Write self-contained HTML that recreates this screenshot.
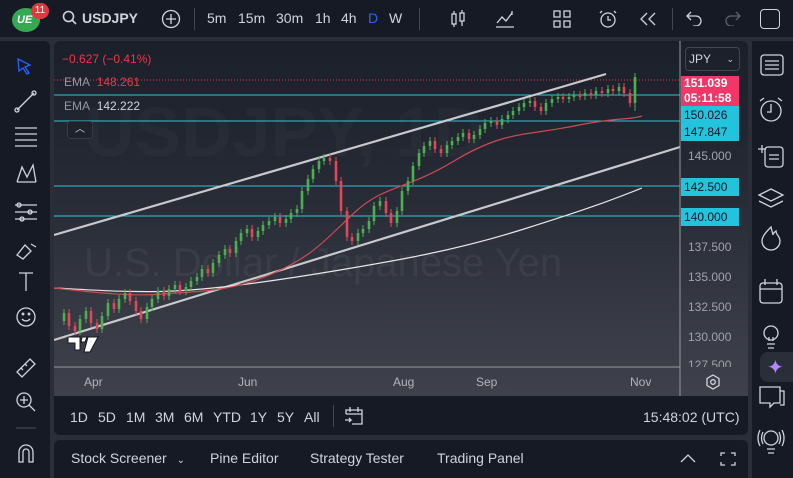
<!DOCTYPE html>
<html><head><meta charset="utf-8"><style>
*{margin:0;padding:0;box-sizing:border-box}
body{width:793px;height:478px;background:#2a2e39;font-family:"Liberation Sans",sans-serif;overflow:hidden;position:relative;color:#d1d4dc}
.abs{position:absolute}
.top{left:0;top:0;width:793px;height:37px;background:#161a25}
.tb{font-size:14px;color:#d1d4dc;top:10px}
.left{left:0;top:41px;width:50px;height:437px;background:#161a25;border-radius:0 6px 0 0}
.right{left:752px;top:41px;width:41px;height:437px;background:#161a25}
.chart{left:54px;top:41px;width:694px;height:355px;background:linear-gradient(#1b1f2a 0%,#262a35 40%,#3a3d47 85%,#3e414b 100%);border-radius:6px 6px 0 0;overflow:hidden}
.range{left:54px;top:396px;width:694px;height:39px;background:#161a25;border-radius:0 0 6px 6px}
.bot{left:54px;top:440px;width:694px;height:38px;background:#161a25;border-radius:6px 6px 0 0}
.lbl{position:absolute;left:681px;width:58px;height:18px;font-size:12px;line-height:18px;padding-left:3px;color:#131722}
.ax{position:absolute;left:688px;font-size:12px;color:#a0a3ab}
.rb{font-size:14px;color:#d1d4dc;top:409px}
</style></head><body>
<div class="abs top"></div>
<div class="abs" style="left:12px;top:8px;width:28px;height:24px;border-radius:50%;background:#35a854"></div>
<div class="abs" style="left:17px;top:14px;font-size:11px;font-weight:bold;color:#fff;font-style:italic">UE</div>
<div class="abs" style="left:31px;top:3px;width:18px;height:16px;border-radius:8px;background:#e0383e;color:#fff;font-size:10px;text-align:center;line-height:16px">11</div>
<svg class="abs" style="left:62px;top:10px" width="16" height="16"><circle cx="6.5" cy="6.5" r="5" fill="none" stroke="#d1d4dc" stroke-width="1.6"/><path d="M10 10l4 4" stroke="#d1d4dc" stroke-width="1.6"/></svg>
<div class="abs tb" style="left:82px;font-weight:bold">USDJPY</div>
<svg class="abs" style="left:161px;top:9px" width="20" height="20"><circle cx="10" cy="10" r="8.5" fill="none" stroke="#d1d4dc" stroke-width="1.3"/><path d="M10 5v10M5 10h10" stroke="#d1d4dc" stroke-width="1.3"/></svg>
<div class="abs" style="left:194px;top:8px;width:1px;height:22px;background:#434651"></div>
<div class="abs tb" style="left:207px">5m</div><div class="abs tb" style="left:238px">15m</div><div class="abs tb" style="left:276px">30m</div><div class="abs tb" style="left:315px">1h</div><div class="abs tb" style="left:341px">4h</div><div class="abs tb" style="left:368px;color:#2962ff">D</div><div class="abs tb" style="left:389px">W</div>
<div class="abs" style="left:419px;top:8px;width:1px;height:22px;background:#434651"></div>
<svg class="abs" style="left:448px;top:9px" width="20" height="20" stroke="#d1d4dc" fill="none" stroke-width="1.3"><rect x="4" y="5" width="4" height="10"/><path d="M6 2v3M6 15v3"/><rect x="12" y="4" width="4" height="8"/><path d="M14 1v3M14 12v5"/></svg>
<svg class="abs" style="left:494px;top:9px" width="22" height="20" stroke="#d1d4dc" fill="none" stroke-width="1.3"><path d="M2 18h18M3 14l5-6 4 4 6-8"/><path d="M18 2v4"/></svg>
<svg class="abs" style="left:552px;top:9px" width="20" height="20" stroke="#d1d4dc" fill="none" stroke-width="1.3"><rect x="2" y="2" width="6" height="6"/><rect x="12" y="2" width="6" height="6"/><rect x="2" y="12" width="6" height="6"/><rect x="12" y="12" width="6" height="6"/></svg>
<svg class="abs" style="left:598px;top:8px" width="22" height="22" stroke="#d1d4dc" fill="none" stroke-width="1.3"><circle cx="10" cy="12" r="7"/><path d="M10 8v4h3M4 3l-2 2M16 3l2 2"/></svg>
<svg class="abs" style="left:638px;top:10px" width="20" height="18" stroke="#d1d4dc" fill="none" stroke-width="1.3"><path d="M9 3l-6 6 6 6M17 3l-6 6 6 6"/></svg>
<div class="abs" style="left:672px;top:8px;width:1px;height:22px;background:#434651"></div>
<svg class="abs" style="left:685px;top:10px" width="18" height="16" stroke="#d1d4dc" fill="none" stroke-width="1.3"><path d="M6 2L2 6l4 4M2 6h9a5 5 0 010 10H8"/></svg>
<svg class="abs" style="left:724px;top:10px" width="18" height="16" stroke="#5d606b" fill="none" stroke-width="1.3"><path d="M12 2l4 4-4 4M16 6H7a5 5 0 000 10h3"/></svg>
<div class="abs" style="left:760px;top:9px;width:20px;height:20px;border:1.5px solid #d1d4dc;border-radius:4px"></div>

<div class="abs left"></div>
<svg class="abs" style="left:0;top:50px" width="50" height="428" stroke="#d1d4dc" fill="none" stroke-width="1.3">
<path d="M18 9l12 6-5 2 4 6-2 1-4-6-4 3z" stroke="#2962ff"/>
<path d="M17 60l17-17"/><circle cx="17" cy="60" r="2"/><circle cx="34" cy="43" r="2"/>
<path d="M15 78h22M15 84h22M15 90h22M15 96h22"/>
<path d="M17 132l5-15 5 10 6-12 3 17M17 132h19"/>
<path d="M15 155h22M15 162h22M15 169h22"/><circle cx="19" cy="155" r="2"/><circle cx="30" cy="162" r="2"/><circle cx="22" cy="169" r="2"/>
<path d="M17 205l8-10 6 6-8 8zM31 194l5 3"/>
<path d="M19 223h14M26 223v18"/>
<circle cx="26" cy="267" r="9"/><path d="M22 269q4 4 8 0"/><circle cx="23" cy="264" r=".8"/><circle cx="29" cy="264" r=".8"/>
<path d="M17 322l13-13 5 5-13 13zM21 318l2 2M25 314l2 2"/>
<circle cx="24" cy="350" r="7"/><path d="M29 355l6 6M24 346v8M20 350h8"/>
<path d="M16 378h20" stroke="#434651"/>
<path d="M19 412v-10a7 7 0 0114 0v10h-4v-10a3 3 0 00-6 0v10z"/>
</svg>

<div class="abs right"></div>
<svg class="abs" style="left:752px;top:41px" width="41" height="437" stroke="#d1d4dc" fill="none" stroke-width="1.3">
<rect x="9" y="14" width="22" height="20" rx="3"/><path d="M13 20h14M13 24h14M13 28h14"/>
<circle cx="19" cy="70" r="10"/><path d="M19 63v8h-4M8 60l4-3M30 60l-4-3"/>
<path d="M10 104v8M6 108h8"/><rect x="13" y="106" width="18" height="20" rx="3"/><path d="M17 114h10M17 118h10"/>
<path d="M19 148l12 6-12 6-12-6zM7 160l12 6 12-6"/>
<path d="M19 186c-6 6-9 10-9 14a9 9 0 0018 0c0-5-4-6-4-10-3 2-3 4-3 4s-1-4-2-8z"/>
<rect x="8" y="242" width="22" height="20" rx="3"/><path d="M8 248h22M13 238v6M25 238v6"/>
<circle cx="19" cy="292" r="7"/><path d="M15 303h8M16 307h6M17 296v4M21 296v4"/>
<path d="M8 346h20v16h-6l-4 4v-4h-10zM28 350h4v14h-4"/>
<circle cx="19" cy="397" r="7"/><path d="M15 408h8M16 412h6M11 391q-3 6 0 12M27 391q3 6 0 12M8 389q-4 8 0 16M30 389q4 8 0 16"/>
</svg>
<div class="abs" style="left:760px;top:352px;width:33px;height:30px;background:#2a2e39;border-radius:8px 0 0 8px"></div>
<div class="abs" style="left:767px;top:355px;font-size:20px;color:#b388ff">✦</div>

<div class="abs chart">
<svg width="694" height="355" style="position:absolute;left:0;top:0">
<text x="30" y="235" font-size="40" fill="#ffffff" fill-opacity="0.05" font-family="Liberation Sans">U.S. Dollar / Japanese Yen</text>
<text x="30" y="115" font-size="70" fill="#ffffff" fill-opacity="0.022" font-family="Liberation Sans" font-weight="bold">USDJPY, 1D</text>
<line x1="0" y1="54" x2="626" y2="54" stroke="#2fc4d6" stroke-width="1"/>
<line x1="0" y1="80" x2="626" y2="80" stroke="#2fc4d6" stroke-width="1"/>
<line x1="0" y1="145" x2="626" y2="145" stroke="#2fc4d6" stroke-width="1"/>
<line x1="0" y1="175" x2="626" y2="175" stroke="#2fc4d6" stroke-width="1"/>
<line x1="0" y1="39" x2="626" y2="39" stroke="#f23645" stroke-width="1" stroke-dasharray="1,2"/>
<line x1="0" y1="194" x2="552" y2="33" stroke="#c8c9cc" stroke-width="2.2"/>
<line x1="0" y1="299" x2="626" y2="106" stroke="#c8c9cc" stroke-width="2.2"/>
<path d="M0 247C40 249 80 252 120 250S220 240 280 230S400 210 470 188S560 158 588 147" stroke="#e8e8e8" stroke-width="1.2" fill="none"/>
<path d="M0 247C30 250 70 256 110 253S180 250 220 232S270 200 300 172S350 150 400 120S470 95 520 85S570 80 588 75" stroke="#d04a50" stroke-width="1.2" fill="none"/>
<path stroke="#4caf50" stroke-width="1" fill="none" d="M10 284V268M26 294V274M32 282V266M48 292V271M54 279V258M65 272V254M71 262V248M93 282V262M98 270V254M104 262V246M115 259V244M121 252V240M132 254V242M137 250V236M143 244V232M148 240V224M159 236V218M165 226V210M171 218V204M182 216V196M187 204V188M193 196V184M204 200V186M209 194V180M215 188V176M221 184V172M232 186V174M237 182V168M243 176V164M248 172V146M254 154V134M259 142V124M265 132V116M270 124V113M304 204V188M309 196V184M315 192V176M320 184V161M326 169V156M343 186V166M348 174V146M354 154V136M359 144V121M365 129V108M370 116V101M376 109V96M393 116V100M398 108V96M404 104V92M409 100V88M420 102V90M426 98V84M431 92V78M437 86V76M448 88V74M454 82V70M459 78V66M465 74V62M470 70V58M476 66V56M492 74V58M498 66V54M504 62V52M515 62V52M520 60V50M531 59V48M542 58V46M554 56V44M565 54V42M581 70V32"/>
<path stroke="#4caf50" stroke-width="2.6" fill="none" d="M10 280V272M26 290V278M32 278V270M48 288V275M54 275V262M65 268V258M71 258V252M93 278V266M98 266V258M104 258V250M115 255V248M121 248V244M132 250V246M137 246V240M143 240V236M148 236V228M159 232V222M165 222V214M171 214V208M182 212V200M187 200V192M193 192V188M204 196V190M209 190V184M215 184V180M221 180V176M232 182V178M237 178V172M243 172V168M248 168V150M254 150V138M259 138V128M265 128V120M270 120V117M304 200V192M309 192V188M315 188V180M320 180V165M326 165V160M343 182V170M348 170V150M354 150V140M359 140V125M365 125V112M370 112V105M376 105V100M393 112V104M398 104V100M404 100V96M409 96V92M420 98V94M426 94V88M431 88V82M437 82V80M448 84V78M454 78V74M459 74V70M465 70V66M470 66V62M476 62V60M492 70V62M498 62V58M504 58V56M515 58V56M520 56V54M531 55V52M542 54V50M554 52V48M565 50V46M581 62V36"/>
<path stroke="#e0485a" stroke-width="1" fill="none" d="M15 268V289M21 281V294M37 266V286M43 278V292M60 258V272M76 248V264M82 256V274M87 266V282M110 246V259M126 240V254M154 224V236M176 204V216M198 184V200M226 172V186M276 113V124M282 116V144M287 136V174M293 166V200M298 192V204M332 156V176M337 168V186M381 96V112M387 104V116M415 88V102M443 76V88M481 56V70M487 62V74M509 52V62M526 50V59M537 48V58M548 46V56M559 44V54M570 42V56M576 48V66"/>
<path stroke="#e0485a" stroke-width="2.6" fill="none" d="M15 272V285M21 285V290M37 270V282M43 282V288M60 262V268M76 252V260M82 260V270M87 270V278M110 250V255M126 244V250M154 228V232M176 208V212M198 188V196M226 176V182M276 117V120M282 120V140M287 140V170M293 170V196M298 196V200M332 160V172M337 172V182M381 100V108M387 108V112M415 92V98M443 80V84M481 60V66M487 66V70M509 56V58M526 54V56M537 52V54M548 50V52M559 48V50M570 46V52M576 52V62"/>
<g transform="translate(14,296)" fill="#fff" stroke="#131722" stroke-width="1"><path d="M0 0h12v13h-5v-7h-7zM14 0h5l-2 5h-4zM20 0h10l-8 15h-6z"/></g>
<line x1="0" y1="326" x2="626" y2="326" stroke="#9598a1" stroke-width="1"/>
<line x1="626" y1="0" x2="626" y2="355" stroke="#9598a1" stroke-width="1"/>
</svg>
</div>
<div class="abs" style="left:62px;top:52px;font-size:12px;color:#f23645">−0.627 (−0.41%)</div>
<div class="abs" style="left:64px;top:75px;font-size:12px;color:#9598a1">EMA <span style="color:#f23645;margin-left:4px">148.261</span></div>
<div class="abs" style="left:64px;top:99px;font-size:12px;color:#9598a1">EMA <span style="color:#d1d4dc;margin-left:4px">142.222</span></div>
<div class="abs" style="left:67px;top:121px;width:26px;height:18px;border:1px solid #363a45;border-radius:3px;background:#1e222d;color:#d1d4dc;font-size:10px;text-align:center;line-height:16px">︿</div>
<div class="abs" style="left:685px;top:47px;width:55px;height:24px;border:1px solid #434651;border-radius:4px;font-size:12px;line-height:22px;padding-left:3px;color:#d1d4dc">JPY<span style="position:absolute;right:5px;font-size:9px">⌄</span></div>
<div class="lbl" style="top:76px;height:30px;background:#f23668;color:#fff;font-weight:bold;line-height:15px;padding-top:0">151.039<br>05:11:58</div>
<div class="lbl" style="top:106px;background:#22c3dc">150.026</div>
<div class="lbl" style="top:123px;background:#22c3dc">147.847</div>
<div class="ax" style="top:149px">145.000</div>
<div class="lbl" style="top:178px;background:#22c3dc">142.500</div>
<div class="lbl" style="top:208px;background:#22c3dc">140.000</div>
<div class="ax" style="top:240px">137.500</div>
<div class="ax" style="top:270px">135.000</div>
<div class="ax" style="top:300px">132.500</div>
<div class="ax" style="top:330px">130.000</div>
<div class="ax" style="top:358px;height:9px;overflow:hidden;line-height:14px">127.500</div>
<div class="abs" style="left:84px;top:375px;font-size:12px;color:#b2b5be">Apr</div>
<div class="abs" style="left:238px;top:375px;font-size:12px;color:#b2b5be">Jun</div>
<div class="abs" style="left:393px;top:375px;font-size:12px;color:#b2b5be">Aug</div>
<div class="abs" style="left:476px;top:375px;font-size:12px;color:#b2b5be">Sep</div>
<div class="abs" style="left:630px;top:375px;font-size:12px;color:#b2b5be">Nov</div>
<svg class="abs" style="left:705px;top:374px" width="16" height="16" stroke="#d1d4dc" fill="none" stroke-width="1.3"><path d="M8 1l6 3.5v7L8 15l-6-3.5v-7z"/><circle cx="8" cy="8" r="2.3"/></svg>

<div class="abs range"></div>
<div class="abs rb" style="left:70px">1D</div><div class="abs rb" style="left:98px">5D</div><div class="abs rb" style="left:126px">1M</div><div class="abs rb" style="left:155px">3M</div><div class="abs rb" style="left:184px">6M</div><div class="abs rb" style="left:213px">YTD</div><div class="abs rb" style="left:250px">1Y</div><div class="abs rb" style="left:277px">5Y</div><div class="abs rb" style="left:304px">All</div>
<div class="abs" style="left:333px;top:405px;width:1px;height:22px;background:#434651"></div>
<svg class="abs" style="left:344px;top:406px" width="20" height="20" stroke="#d1d4dc" fill="none" stroke-width="1.3"><path d="M2 8V4h16v14H8M2 8h16M6 1v5M14 1v5M1 14h6l-2-2M7 14l-2 2"/></svg>
<div class="abs rb" style="left:643px">15:48:02 (UTC)</div>

<div class="abs bot"></div>
<div class="abs" style="left:71px;top:450px;font-size:14px">Stock Screener <span style="font-size:10px;margin-left:6px">⌄</span></div>
<div class="abs" style="left:210px;top:450px;font-size:14px">Pine Editor</div>
<div class="abs" style="left:310px;top:450px;font-size:14px">Strategy Tester</div>
<div class="abs" style="left:437px;top:450px;font-size:14px">Trading Panel</div>
<svg class="abs" style="left:678px;top:450px" width="60" height="18" stroke="#d1d4dc" fill="none" stroke-width="1.3"><path d="M3 12l7-7 7 7"/><path d="M43 6V3h4M53 3h4v3M57 12v3h-4M47 15h-4v-3"/></svg>
</body></html>
